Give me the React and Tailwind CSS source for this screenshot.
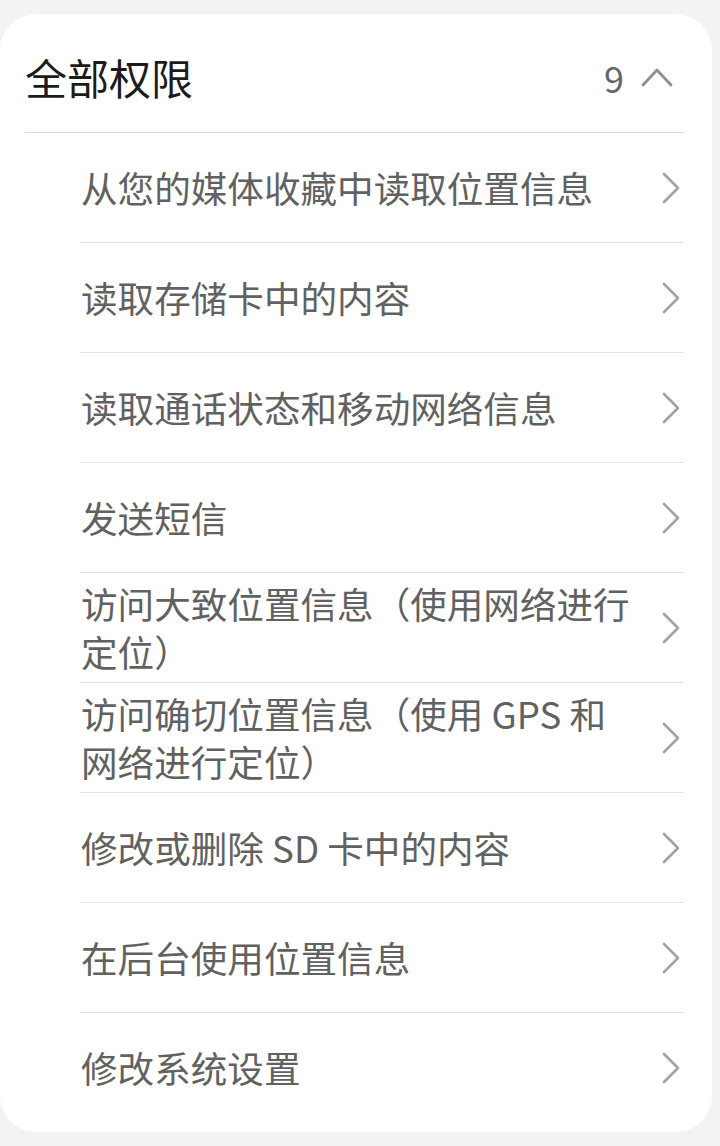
import React from 'react';

const items = [
  '从您的媒体收藏中读取位置信息',
  '读取存储卡中的内容',
  '读取通话状态和移动网络信息',
  '发送短信',
  '访问大致位置信息（使用网络进行定位）',
  '访问确切位置信息（使用 GPS 和网络进行定位）',
  '修改或删除 SD 卡中的内容',
  '在后台使用位置信息',
  '修改系统设置',
];

const font = { fontFamily: '"Noto Sans CJK SC", "Noto Sans", sans-serif' };

function ChevronRight() {
  return (
    <svg width="22" height="34" viewBox="0 0 22 34" fill="none" className="shrink-0">
      <path d="M4 3 L18 17 L4 31" stroke="#a3a3a3" strokeWidth="2.6" strokeLinecap="round" strokeLinejoin="round" />
    </svg>
  );
}

function ChevronUp() {
  return (
    <svg width="34" height="24" viewBox="0 0 34 24" fill="none">
      <path d="M3 20 L17 5 L31 20" stroke="#8f8f8f" strokeWidth="2.8" strokeLinecap="round" strokeLinejoin="round" />
    </svg>
  );
}

export default function App() {
  return (
    <div className="min-h-[1146px] bg-[#f1f3f5] pt-[14px] pr-[8px]" style={font}>
      <div className="bg-white rounded-[36px] pb-[9px]">
        <div className="h-[118px] flex items-center justify-between pl-[25px] pr-[38px] pt-[8px]">
          <h1 className="text-[42px] leading-none text-[#1b1b1b]">全部权限</h1>
          <div className="flex items-center gap-[16px]">
            <span className="text-[36px] leading-none text-[#666666]">9</span>
            <ChevronUp />
          </div>
        </div>
        <div className="ml-[25px] mr-[28px] h-px bg-[#dcdcdc]" />
        <ul>
          {items.map((label, i) => (
            <li
              key={label}
              className={`ml-[80px] mr-[28px] h-[110px] flex items-center justify-between ${
                i < items.length - 1 ? 'border-b border-[#e3e3e3]' : ''
              }`}
            >
              <span className="pl-px w-[554px] text-[36.6px] leading-[48px] text-[#616161]">{label}</span>
              <span className="mr-[2px]">
                <ChevronRight />
              </span>
            </li>
          ))}
        </ul>
      </div>
    </div>
  );
}
